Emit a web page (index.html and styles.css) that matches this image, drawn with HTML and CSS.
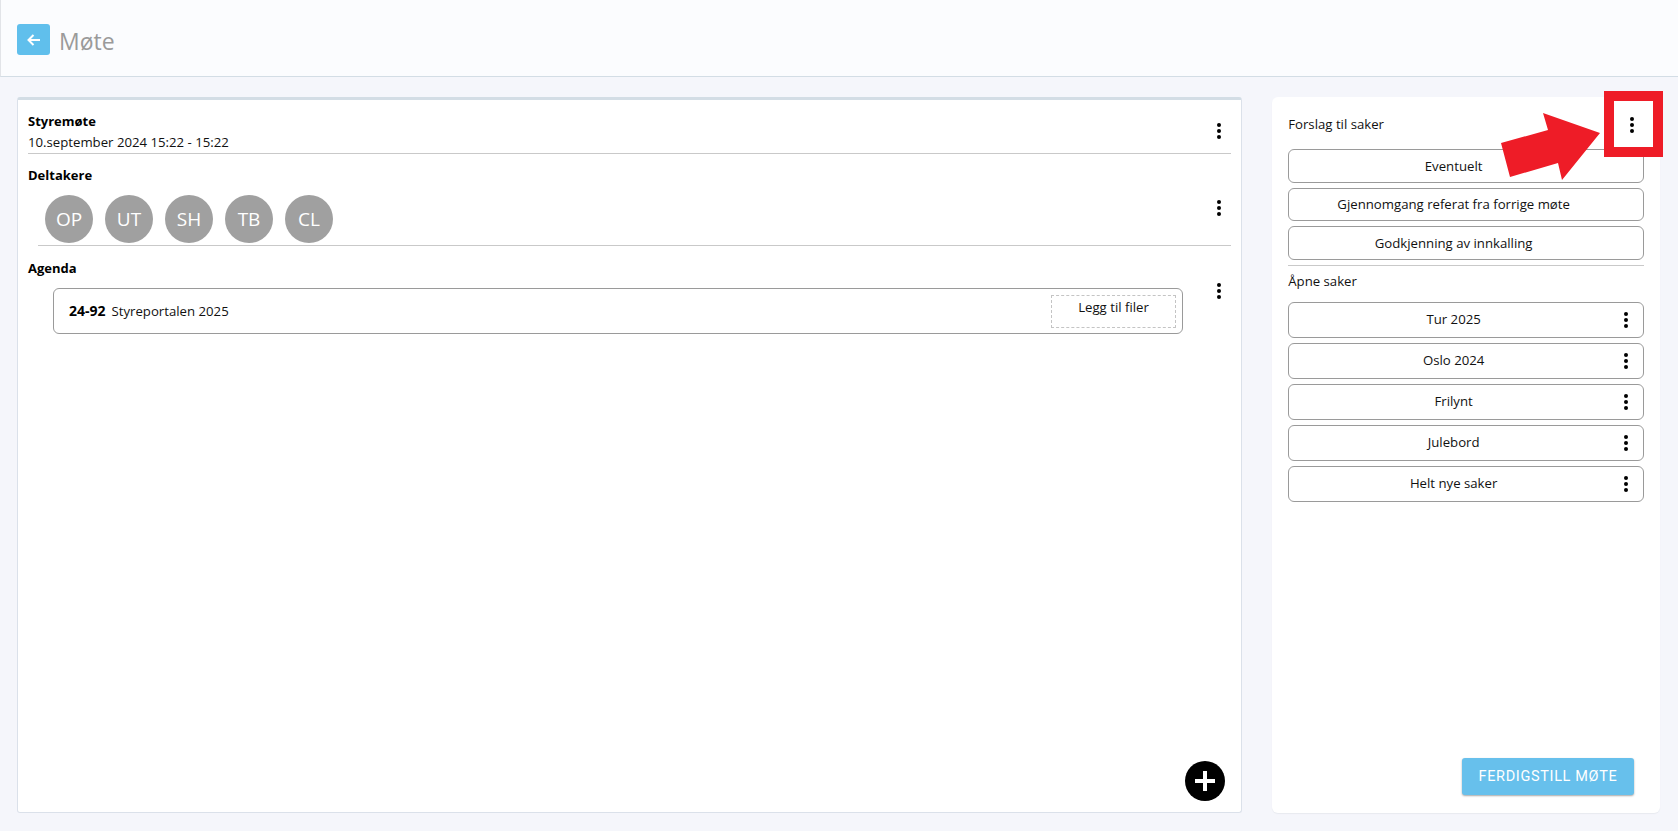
FILE: index.html
```html
<!DOCTYPE html>
<html lang="no">
<head>
<meta charset="utf-8">
<title>Møte</title>
<link rel="stylesheet" href="styles.css">
</head>
<body>
<svg class="sprite" width="0" height="0"><defs><symbol id="kebab" viewBox="0 0 6 18"><circle cx="3" cy="3" r="2"/><circle cx="3" cy="9" r="2"/><circle cx="3" cy="15" r="2"/></symbol></defs></svg>
<header class="topbar">
  <button class="back" aria-label="Tilbake"><svg width="14" height="12" viewBox="0 0 14 12"><path d="M6.5 1 1.5 6l5 5M2 6h11" fill="none" stroke="#fff" stroke-width="2"/></svg></button>
  <h1 class="title">Møte</h1>
</header>
<main class="content">
  <section class="meeting">
    <div class="block block-head">
      <div class="block-text">
        <div class="label">Styremøte</div>
        <div class="date">10.september 2024 15:22 - 15:22</div>
      </div>
      <svg class="kebab"><use href="#kebab"/></svg>
    </div>
    <div class="block block-people">
      <div class="block-text">
        <div class="label">Deltakere</div>
        <div class="avatars">
          <span class="avatar">OP</span><span class="avatar">UT</span><span class="avatar">SH</span><span class="avatar">TB</span><span class="avatar">CL</span>
        </div>
      </div>
      <svg class="kebab"><use href="#kebab"/></svg>
    </div>
    <div class="agenda">
      <div class="label">Agenda</div>
      <div class="agenda-row">
        <div class="agenda-item">
          <b class="case-no">24-92</b><span>Styreportalen 2025</span>
          <div class="dropzone">Legg til filer</div>
        </div>
        <svg class="kebab"><use href="#kebab"/></svg>
      </div>
    </div>
    <button class="fab" aria-label="Legg til"><svg width="20" height="20" viewBox="0 0 20 20"><path d="M0 10h20M10 0v20" stroke="#fff" stroke-width="4"/></svg></button>
  </section>
  <aside class="side">
    <div class="side-head"><span>Forslag til saker</span><svg class="kebab"><use href="#kebab"/></svg></div>
    <div class="list list-proposals">
      <div class="pill">Eventuelt</div>
      <div class="pill">Gjennomgang referat fra forrige møte</div>
      <div class="pill">Godkjenning av innkalling</div>
    </div>
    <div class="side-sub">Åpne saker</div>
    <div class="list list-open">
      <div class="pill pill-open">Tur 2025<svg class="kebab"><use href="#kebab"/></svg></div>
      <div class="pill pill-open">Oslo 2024<svg class="kebab"><use href="#kebab"/></svg></div>
      <div class="pill pill-open">Frilynt<svg class="kebab"><use href="#kebab"/></svg></div>
      <div class="pill pill-open">Julebord<svg class="kebab"><use href="#kebab"/></svg></div>
      <div class="pill pill-open">Helt nye saker<svg class="kebab"><use href="#kebab"/></svg></div>
    </div>
    <button class="finish">FERDIGSTILL MØTE</button>
  </aside>
</main>
<div class="callout-box"></div>
<svg class="callout-arrow" width="100" height="70" viewBox="0 0 100 70"><path d="M43 3 100 23 62 70 58 53 10 67 1 33 48 20Z" fill="#ee1c27"/></svg>
</body>
</html>
```
FILE: styles.css
```css
* { box-sizing: border-box; }
html, body { height: 100%; }
body {
  margin: 0;
  height: 831px;
  overflow: hidden;
  background: #f5f6fb;
  color: #111;
  font: 13.2px/18px "Open Sans", "Noto Sans", sans-serif;
  position: relative;
}
.sprite { position: absolute; }
.topbar {
  height: 77px;
  display: flex;
  align-items: center;
  gap: 9px;
  padding: 3px 0 0 17px;
  background: #fbfcfe;
  border-bottom: 1px solid #d3dde5;
  border-left: 1px solid #e2e4e8;
}
.back {
  width: 33px;
  height: 31px;
  margin-left: -1px;
  padding: 0;
  border: 0;
  border-radius: 3px;
  background: #60bfec;
  display: flex;
  align-items: center;
  justify-content: center;
}
.title {
  margin: 2px 0 0;
  font: 400 23px/32px "Open Sans", sans-serif;
  color: #9a9a9a;
}
.content {
  display: flex;
  align-items: flex-start;
  gap: 30px;
  padding: 20px 18px 0 17px;
}
.meeting {
  position: relative;
  width: 1226px;
  height: 716px;
  padding: 12px 10px 0 10px;
  background: #fff;
  border: 1px solid #dbe1ea;
  border-top: 3px solid #d3dde5;
  border-radius: 3px;
}
.label { font-weight: 700; font-size: 13px; color: #000; }
.block { display: flex; justify-content: space-between; border-bottom: 1px solid #c9c9c9; }
.block-head { height: 42px; }
.block-head .kebab { margin: 10px 9px 0 0; }
.date { margin-top: 3px; }
.block-people { height: 92px; margin-left: 10px; padding-top: 12px; }
.block-people .label { margin-left: -10px; }
.block-people .kebab { margin: 33px 9px 0 0; }
.avatars { display: flex; gap: 12px; margin: 11px 0 0 7px; }
.avatar {
  width: 48px;
  height: 48px;
  border-radius: 50%;
  background: #a0a0a0;
  color: #fff;
  font-size: 19px;
  display: flex;
  align-items: center;
  justify-content: center;
}
.agenda { padding-top: 13px; }
.agenda-row { display: flex; margin: 11px 0 0 25px; }
.agenda-item {
  width: 1130px;
  height: 46px;
  display: flex;
  align-items: center;
  padding: 0 6px 0 15px;
  border: 1px solid #9a9a9a;
  border-radius: 6px;
}
.case-no { margin-right: 6px; color: #000; font-size: 14px; }
.dropzone {
  margin-left: auto;
  width: 125px;
  height: 33px;
  padding-top: 2px;
  text-align: center;
  border: 1px dashed #c4c4c4;
}
.agenda-row .kebab { margin: -6px 0 0 33px; }
.kebab { width: 6px; height: 18px; fill: #000; flex: none; }
.fab {
  position: absolute;
  right: 16px;
  bottom: 11px;
  width: 40px;
  height: 40px;
  padding: 0;
  border: 0;
  border-radius: 50%;
  background: #000;
  display: flex;
  align-items: center;
  justify-content: center;
}
.side {
  position: relative;
  width: 388px;
  height: 716px;
  padding: 0 16px;
  background: #fff;
  border-radius: 6px;
  box-shadow: 0 1px 1px #e8eaef;
}
.side-head {
  height: 52px;
  display: flex;
  align-items: center;
  justify-content: space-between;
  padding: 2px 0 0;
}
.side-head .kebab { margin: 2px 9px 0 0; }
.list { display: flex; flex-direction: column; gap: 5px; }
.list-proposals { padding-bottom: 5px; border-bottom: 1px solid #c9c9c9; }
.pill {
  min-height: 33.5px;
  display: flex;
  align-items: center;
  justify-content: center;
  padding-right: 25px;
  border: 1px solid #9a9a9a;
  border-radius: 6px;
  text-align: center;
}
.side-sub { margin: 6.5px 0 11.5px; }
.pill-open { position: relative; height: 36px; padding-bottom: 2px; }
.pill-open .kebab { position: absolute; right: 14px; top: 8px; }
.finish {
  position: absolute;
  right: 26px;
  bottom: 18px;
  width: 172px;
  height: 37px;
  padding: 0;
  border: 0;
  border-radius: 3px;
  background: #67c0ec;
  color: #fff;
  font: 400 14.5px/20px Roboto, sans-serif;
  letter-spacing: .65px;
  box-shadow: 0 1px 2px rgba(0,0,0,.35);
}
.callout-box {
  position: absolute;
  left: 1604px;
  top: 91px;
  width: 59px;
  height: 66px;
  border: 10px solid #ee1c27;
}
.callout-arrow { position: absolute; left: 1500px; top: 110px; }
```
